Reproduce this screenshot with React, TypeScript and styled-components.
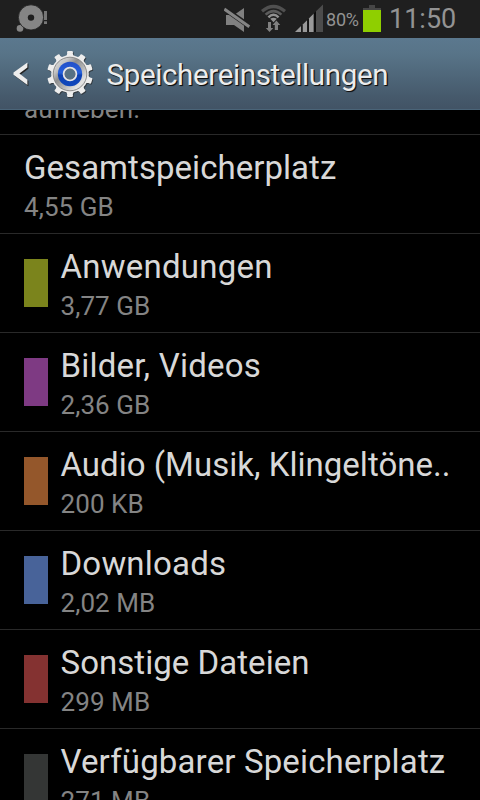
import React from 'react';
import styled, { createGlobalStyle } from 'styled-components';

const GlobalStyle = createGlobalStyle`
  * { box-sizing: border-box; }
  html, body { margin: 0; background: #000; overflow: hidden; }
`;

const Screen = styled.main`
  width: 480px;
  height: 800px;
  overflow: hidden;
  display: flex;
  flex-direction: column;
  background: #000;
  font-family: Roboto, 'Liberation Sans', sans-serif;
`;

const StatusBar = styled.header`
  flex: none;
  height: 38px;
  display: flex;
  justify-content: space-between;
  background: #1f1f1f;
  color: #939393;
`;

const StatusGroup = styled.div`
  display: flex;
  height: 38px;
`;

const Percent = styled.span`
  width: 37px;
  padding-left: 0;
  font-size: 18px;
  line-height: 40px;
  letter-spacing: -0.2px;
  white-space: nowrap;
`;

const Clock = styled.time`
  width: 99px;
  padding-left: 8px;
  font-size: 27px;
  line-height: 38px;
  white-space: nowrap;
`;

const TitleBar = styled.div`
  flex: none;
  height: 72px;
  display: flex;
  align-items: center;
  background: linear-gradient(#5b788e 0, #587488 16px, #465a6c 58px, #425466 70px);
  border-bottom: 1px solid #4a6478;
`;

const Heading = styled.h1`
  margin: 2px 0 0 9.5px;
  font-size: 29.5px;
  font-weight: 400;
  line-height: 34px;
  letter-spacing: -0.35px;
  color: #ececec;
  text-shadow: 1px 1px 0 #111, 1px 1px 1px #222;
  white-space: nowrap;
`;

const Scroll = styled.section`
  flex: 1;
  min-height: 0;
  overflow: hidden;
`;

const Note = styled.p`
  height: 25px;
  margin: 0;
  border-bottom: 1px solid #292929;
  display: flex;
  align-items: flex-end;
  padding: 0 24px 9px;
  font-size: 26px;
  line-height: 32px;
  letter-spacing: 0.1px;
  color: #848484;
  overflow: hidden;
`;

const Row = styled.article`
  height: 99px;
  display: flex;
  gap: 12.5px;
  padding: 0 24px;
  border-bottom: 1px solid #292929;
`;

const Swatch = styled.span<{ $color: string }>`
  flex: none;
  width: 24px;
  height: 48px;
  margin-top: 25px;
  background: ${(p) => p.$color};
`;

const Label = styled.div`
  padding-top: 13px;
  white-space: nowrap;
`;

const Name = styled.h2<{ $tracking: number }>`
  margin: 0;
  width: max-content;
  font-size: 33px;
  font-weight: 400;
  line-height: 39px;
  letter-spacing: ${(p) => p.$tracking}px;
  color: #d8d8d8;
`;

const Size = styled.p`
  margin: 4px 0 0;
  width: max-content;
  font-size: 26px;
  line-height: 32px;
  letter-spacing: 0.08px;
  color: #848484;
`;

const Icon = styled.svg`
  flex: none;
  display: block;
`;

type Entry = { name: string; size: string; color?: string; tracking: number };

const entries: Entry[] = [
  { name: 'Gesamtspeicherplatz', size: '4,55 GB', tracking: 0.04 },
  { name: 'Anwendungen', size: '3,77 GB', color: '#7b841c', tracking: 0.24 },
  { name: 'Bilder, Videos', size: '2,36 GB', color: '#7e3a83', tracking: 0.2 },
  { name: 'Audio (Musik, Klingeltöne..', size: '200 KB', color: '#94572b', tracking: 0.02 },
  { name: 'Downloads', size: '2,02 MB', color: '#486399', tracking: 0.2 },
  { name: 'Sonstige Dateien', size: '299 MB', color: '#843231', tracking: 0.04 },
  { name: 'Verfügbarer Speicherplatz', size: '271 MB', color: '#343635', tracking: 0.15 },
];

const DiscIcon = () => (
  <Icon width="50" height="38" viewBox="0 0 50 38">
    <circle cx="20" cy="28.4" r="3.3" fill="#858585" />
    <circle cx="31" cy="17.4" r="12.6" fill="#858585" stroke="#1f1f1f" strokeWidth="0.8" />
    <circle cx="31" cy="17.6" r="3.2" fill="#1f1f1f" />
    <path d="M44 11h3v9h-3zM44 21.3h3V24h-3z" fill="#777" />
  </Icon>
);

const MuteIcon = () => (
  <Icon width="36" height="38" viewBox="224 0 36 38">
    <path d="M226 15h8l10-7v24l-10-7h-8z" fill="#808080" />
    <path d="M223 7.5l28 19.8" stroke="#1f1f1f" strokeWidth="5.2" />
    <path d="M224.3 9l25 17.7" stroke="#858585" strokeWidth="3" />
  </Icon>
);

const WifiIcon = () => (
  <Icon width="34" height="38" viewBox="260 0 34 38">
    <g fill="none">
      <path d="M262 11.2Q273.5 1.8 285 11.2" stroke="#505050" strokeWidth="3.2" />
      <path d="M265.6 14.6Q273.5 7.6 281.4 14.6" stroke="#5c5c5c" strokeWidth="2.6" />
      <path d="M268.4 17.4Q273.5 12.2 278.6 17.4" stroke="#919191" strokeWidth="2.4" />
    </g>
    <path d="M270.2 18.8Q273.5 16.6 276.8 18.8L273.5 22.2z" fill="#919191" />
    <path d="M268 22h3v6h2.3l-3.8 4-3.7-4h2.2zM274.8 30v-5h-2.2l3.8-4.4 3.8 4.4H278v5z" fill="#808080" />
  </Icon>
);

const SignalIcon = () => (
  <Icon width="32" height="38" viewBox="294 0 32 38">
    <path d="M295 32l6.3-6.2V32z" fill="#999" />
    <path d="M302.5 24.8l4.8-4.8v12h-4.8zM308.8 18.5l5-5V32h-5z" fill="#999" />
    <path d="M316 11.3l7-6.8V32h-7z" fill="#4c4c4c" />
    <path d="M301.3 25.8l1.2-1V32h-1.2zM307.3 20l1.5-1.5V32h-1.5zM313.8 13.5l2.2-2.2V32h-2.2z" fill="#0c0c0c" />
  </Icon>
);

const BatteryIcon = () => (
  <Icon width="18" height="38" viewBox="0 0 18 38">
    <path d="M6 5h6v3h6v2H0V8h6z" fill="#464646" />
    <path d="M0 10h18v22H0z" fill="#8fcf00" />
  </Icon>
);

const BackIcon = () => (
  <Icon width="47" height="72" viewBox="0 38 47 72">
    <path d="M28.4 63.6v5.2L20.4 74.8l8 6.2v5.2L14.5 75.8v-2z" fill="#222" />
    <path d="M27.4 62.4v5.2L19.4 73.6l8 6.2V85L13.5 74.8v-2.2z" fill="#ededed" />
  </Icon>
);

const teeth = Array.from({ length: 10 }, (_, i) => i * 36);

const GearIcon = () => (
  <Icon width="50" height="72" viewBox="47 38 50 72">
    <defs>
      <linearGradient id="steel" x1="0" y1="0" x2="1" y2="1">
        <stop offset="0" stopColor="#e4e4e4" />
        <stop offset=".25" stopColor="#c4c4c4" />
        <stop offset=".4" stopColor="#8e8e8e" />
        <stop offset=".6" stopColor="#b5b5b5" />
        <stop offset=".8" stopColor="#e4e4e4" />
        <stop offset="1" stopColor="#ccc" />
      </linearGradient>
      <linearGradient id="blue" x1="0" y1="0" x2="0" y2="1">
        <stop offset="0" stopColor="#2450c8" />
        <stop offset=".45" stopColor="#2560dc" />
        <stop offset=".55" stopColor="#0d41b4" />
        <stop offset="1" stopColor="#1148bc" />
      </linearGradient>
      <g id="gear">
        <circle cx="70" cy="74" r="18.8" />
        {teeth.map((a) => (
          <path key={a} d="M65.7 58l1.5-4.2-.2-1.8q.2-.9 1.2-.9h3.6q1 0 1.2.9l-.2 1.8 1.5 4.2z" transform={`rotate(${a} 70 74)`} />
        ))}
      </g>
    </defs>
    <use href="#gear" x=".8" y="1" fill="#333a40" />
    <use href="#gear" fill="#ededed" />
    <circle cx="70" cy="74" r="16.8" fill="url(#steel)" stroke="#777" strokeWidth=".8" />
    <circle cx="70" cy="74" r="12.2" fill="url(#blue)" />
    <circle cx="70" cy="74" r="6.3" fill="none" stroke="#e4e4e4" strokeWidth="2" />
    <circle cx="70" cy="74" r="5.2" fill="#567184" stroke="#777" strokeWidth=".5" />
  </Icon>
);

export default function App() {
  return (
    <>
      <GlobalStyle />
      <Screen>
        <StatusBar>
          <StatusGroup>
            <DiscIcon />
          </StatusGroup>
          <StatusGroup>
            <MuteIcon />
            <WifiIcon />
            <SignalIcon />
            <Percent>80%</Percent>
            <BatteryIcon />
            <Clock>11:50</Clock>
          </StatusGroup>
        </StatusBar>
        <TitleBar>
          <BackIcon />
          <GearIcon />
          <Heading>Speichereinstellungen</Heading>
        </TitleBar>
        <Scroll>
          <Note>aufheben.</Note>
          {entries.map((e) => (
            <Row key={e.name}>
              {e.color && <Swatch $color={e.color} />}
              <Label>
                <Name $tracking={e.tracking}>{e.name}</Name>
                <Size>{e.size}</Size>
              </Label>
            </Row>
          ))}
        </Scroll>
      </Screen>
    </>
  );
}
